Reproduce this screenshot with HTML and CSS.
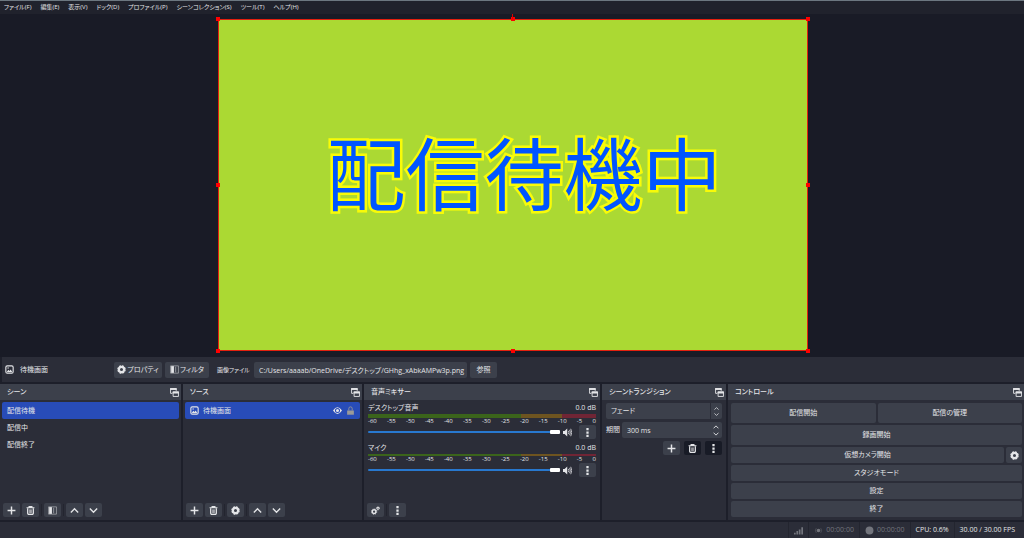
FILE: index.html
```html
<!DOCTYPE html>
<html lang="ja">
<head>
<meta charset="utf-8">
<title>OBS</title>
<link rel="stylesheet" href="styles.css">
</head>
<body>
<svg class="sprite" aria-hidden="true">
  <symbol id="plus" viewBox="0 0 16 16"><path d="M8 1v14M1 8h14" fill="none" stroke="currentColor" stroke-width="2.600"/></symbol>
  <symbol id="trash" viewBox="0 0 16 16"><path d="M1 3h14M5.500 2.500V1h5v1.500" fill="none" stroke="currentColor" stroke-width="2"/><path d="M3 4v9q0 2 2 2h6q2 0 2-2V4" fill="none" stroke="currentColor" stroke-width="2.300"/><path d="M5.500 6h5v7h-5z" fill="currentColor" opacity=".6"/></symbol>
  <symbol id="filter" viewBox="0 0 16 16"><path d="M1 1.500h14v13H1z" fill="none" stroke="currentColor" stroke-width="1.300" opacity=".65"/><path d="M2 2h5v12H2z" fill="currentColor"/><path d="M9 3h2v10H9z" fill="currentColor" opacity=".45"/></symbol>
  <symbol id="up" viewBox="0 0 16 16"><path d="M1.500 11.500L8 5l6.500 6.500" fill="none" stroke="currentColor" stroke-width="2.400"/></symbol>
  <symbol id="down" viewBox="0 0 16 16"><path d="M1.500 4.500L8 11l6.500-6.500" fill="none" stroke="currentColor" stroke-width="2.400"/></symbol>
  <symbol id="gear" viewBox="0 0 16 16"><circle cx="8" cy="8" r="4.600" fill="none" stroke="currentColor" stroke-width="3.800"/><circle cx="8" cy="8" r="6.400" fill="none" stroke="currentColor" stroke-width="2.400" stroke-dasharray="3.200 1.826"/></symbol>
  <symbol id="gears" viewBox="0 0 16 16"><circle cx="5.500" cy="10" r="3.300" fill="none" stroke="currentColor" stroke-width="2.600"/><circle cx="5.500" cy="10" r="4.900" fill="none" stroke="currentColor" stroke-width="1.200" stroke-dasharray="2 1.848"/><circle cx="12.500" cy="4" r="1.900" fill="none" stroke="currentColor" stroke-width="1.800"/><circle cx="12.500" cy="4" r="3" fill="none" stroke="currentColor" stroke-width="1" stroke-dasharray="1.300 1.056"/></symbol>
  <symbol id="dots" viewBox="0 0 16 16"><path d="M6 0h4v4H6zM6 6h4v4H6zM6 12h4v4H6z" fill="currentColor"/></symbol>
  <symbol id="image" viewBox="0 0 16 16"><rect x="1.500" y="1.500" width="13" height="13" rx="2.500" fill="none" stroke="currentColor" stroke-width="2"/><path d="M3 12.500l3-4 2 2 2-2.500 3 4.500z" fill="currentColor"/><circle cx="5.500" cy="5.500" r="1.300" fill="currentColor"/></symbol>
  <symbol id="float" viewBox="0 0 16 16"><path d="M4 9.500H1V1h10v4" fill="none" stroke="currentColor" stroke-width="1.600"/><path d="M.2.2h11.600v3.300H.2z" fill="currentColor"/><path d="M5.500 7h9.500v8H5.500z" fill="none" stroke="currentColor" stroke-width="1.600"/><path d="M4.700 6.200h11.100v3.600H4.700z" fill="currentColor"/></symbol>
  <symbol id="eye" viewBox="0 0 16 16"><path d="M0 8Q8-4 16 8 8 20 0 8z" fill="currentColor"/><circle cx="8" cy="8" r="3.600" fill="none" stroke="#284cb8" stroke-width="1.800"/></symbol>
  <symbol id="lock" viewBox="0 0 16 16"><path d="M5 8V4.500q0-3 3-3t3 3V8" fill="none" stroke="currentColor" stroke-width="1.500"/><path d="M2 8h12v7.500H2z" fill="currentColor"/></symbol>
  <symbol id="speaker" viewBox="0 0 17 16"><path d="M0 5h3l5-4.500v15L3 11H0z" fill="currentColor"/><path d="M10.200 5q2 3 0 6M12.400 3q3.200 5 0 10M14.600 1q4 7 0 14" fill="none" stroke="currentColor" stroke-width="1.500"/></symbol>
  <symbol id="signal" viewBox="0 0 16 16"><path d="M0 12h3v3H0zM4.300 9h3v6h-3zM8.600 6h3v9h-3zM13 2h3v13h-3z" fill="currentColor"/></symbol>
  <symbol id="live" viewBox="0 0 16 16"><circle cx="8" cy="8" r="3.200" fill="currentColor"/><path d="M4 4q-3 4 0 8M12 4q3 4 0 8" fill="none" stroke="currentColor" stroke-width="1.600" opacity=".5"/></symbol>
  <symbol id="record" viewBox="0 0 16 16"><circle cx="8" cy="8" r="7" fill="currentColor"/></symbol>
</svg>

<nav class="menu">
  <button>ファイル(F)</button><button>編集(E)</button><button>表示(V)</button><button>ドック(D)</button><button>プロファイル(P)</button><button>シーンコレクション(S)</button><button>ツール(T)</button><button>ヘルプ(H)</button>
</nav>

<main class="preview">
  <div class="canvas">
    <div class="caption">配信待機中</div>
    <i class="handle top left"></i><i class="handle top center"></i><i class="handle top right"></i>
    <i class="handle middle left"></i><i class="handle middle right"></i>
    <i class="handle bottom left"></i><i class="handle bottom center"></i><i class="handle bottom right"></i>
    <i class="stem"></i>
  </div>
</main>

<section class="context">
  <div class="context-name"><svg class="icon"><use href="#image"/></svg><span>待機画面</span></div>
  <button class="btn wide"><svg class="icon"><use href="#gear"/></svg>プロパティ</button>
  <button class="btn medium"><svg class="icon"><use href="#filter"/></svg>フィルタ</button>
  <label class="context-label" for="path">画像ファイル</label>
  <input class="field path" id="path" value="C:/Users/aaaab/OneDrive/デスクトップ/GHhg_xAbkAMPw3p.png">
  <button class="btn browse">参照</button>
</section>

<div class="docks">
  <section class="dock">
    <header class="dock-head"><h2>シーン</h2><button class="float" aria-label="シーンを切り離す"><svg class="icon"><use href="#float"/></svg></button></header>
    <ul class="list">
      <li class="row selected">配信待機</li>
      <li class="row">配信中</li>
      <li class="row">配信終了</li>
    </ul>
    <footer class="tools">
      <button class="tool" aria-label="追加"><svg class="icon"><use href="#plus"/></svg></button>
      <button class="tool" aria-label="削除"><svg class="icon"><use href="#trash"/></svg></button>
      <i class="split"></i>
      <button class="tool" aria-label="フィルタ"><svg class="icon"><use href="#filter"/></svg></button>
      <i class="split"></i>
      <button class="tool" aria-label="上へ"><svg class="icon"><use href="#up"/></svg></button>
      <button class="tool" aria-label="下へ"><svg class="icon"><use href="#down"/></svg></button>
    </footer>
  </section>

  <section class="dock">
    <header class="dock-head"><h2>ソース</h2><button class="float" aria-label="ソースを切り離す"><svg class="icon"><use href="#float"/></svg></button></header>
    <ul class="list">
      <li class="row selected"><svg class="icon"><use href="#image"/></svg><span class="grow">待機画面</span><svg class="icon"><use href="#eye"/></svg><svg class="icon lock"><use href="#lock"/></svg></li>
    </ul>
    <footer class="tools">
      <button class="tool" aria-label="追加"><svg class="icon"><use href="#plus"/></svg></button>
      <button class="tool" aria-label="削除"><svg class="icon"><use href="#trash"/></svg></button>
      <i class="split"></i>
      <button class="tool" aria-label="プロパティ"><svg class="icon"><use href="#gear"/></svg></button>
      <i class="split"></i>
      <button class="tool" aria-label="上へ"><svg class="icon"><use href="#up"/></svg></button>
      <button class="tool" aria-label="下へ"><svg class="icon"><use href="#down"/></svg></button>
    </footer>
  </section>

  <section class="dock">
    <header class="dock-head"><h2>音声ミキサー</h2><button class="float" aria-label="ミキサーを切り離す"><svg class="icon"><use href="#float"/></svg></button></header>
    <div class="mixer">
      <div class="channel">
        <div class="channel-head"><label for="desk">デスクトップ音声</label><span>0.0 dB</span></div>
        <div class="meter stereo"></div>
        <div class="scale"><span>-60</span><span>-55</span><span>-50</span><span>-45</span><span>-40</span><span>-35</span><span>-30</span><span>-25</span><span>-20</span><span>-15</span><span>-10</span><span>-5</span><span>0</span></div>
        <div class="fader"><input type="range" id="desk" value="100"><button class="mute" aria-label="ミュート"><svg class="icon"><use href="#speaker"/></svg></button><button class="tool" aria-label="メニュー"><svg class="icon"><use href="#dots"/></svg></button></div>
      </div>
      <div class="channel">
        <div class="channel-head"><label for="mic">マイク</label><span>0.0 dB</span></div>
        <div class="meter"></div>
        <div class="scale"><span>-60</span><span>-55</span><span>-50</span><span>-45</span><span>-40</span><span>-35</span><span>-30</span><span>-25</span><span>-20</span><span>-15</span><span>-10</span><span>-5</span><span>0</span></div>
        <div class="fader"><input type="range" id="mic" value="100"><button class="mute" aria-label="ミュート"><svg class="icon"><use href="#speaker"/></svg></button><button class="tool" aria-label="メニュー"><svg class="icon"><use href="#dots"/></svg></button></div>
      </div>
    </div>
    <footer class="tools">
      <button class="tool" aria-label="詳細設定"><svg class="icon"><use href="#gears"/></svg></button>
      <i class="split"></i>
      <button class="tool" aria-label="メニュー"><svg class="icon"><use href="#dots"/></svg></button>
    </footer>
  </section>

  <section class="dock">
    <header class="dock-head"><h2>シーントランジション</h2><button class="float" aria-label="トランジションを切り離す"><svg class="icon"><use href="#float"/></svg></button></header>
    <div class="transition">
      <div class="picker">
        <select class="field" aria-label="トランジション"><option>フェード</option></select>
        <span class="arrows"><svg><use href="#up"/></svg><svg><use href="#down"/></svg></span>
      </div>
      <div class="duration">
        <label for="ms">期間</label>
        <div class="spin">
          <input class="field" id="ms" value="300 ms">
          <span class="steps"><button aria-label="増やす"><svg><use href="#up"/></svg></button><button aria-label="減らす"><svg><use href="#down"/></svg></button></span>
        </div>
      </div>
      <div class="transition-tools">
        <button class="tool" aria-label="追加"><svg class="icon"><use href="#plus"/></svg></button>
        <button class="tool dark" aria-label="削除"><svg class="icon"><use href="#trash"/></svg></button>
        <button class="tool dark" aria-label="メニュー"><svg class="icon"><use href="#dots"/></svg></button>
      </div>
    </div>
  </section>

  <section class="dock">
    <header class="dock-head"><h2>コントロール</h2><button class="float" aria-label="コントロールを切り離す"><svg class="icon"><use href="#float"/></svg></button></header>
    <div class="controls">
      <div class="pair"><button class="btn tall">配信開始</button><button class="btn tall">配信の管理</button></div>
      <button class="btn tall">録画開始</button>
      <div class="pair"><button class="btn">仮想カメラ開始</button><button class="btn square" aria-label="仮想カメラの設定"><svg class="icon"><use href="#gear"/></svg></button></div>
      <button class="btn">スタジオモード</button>
      <button class="btn">設定</button>
      <button class="btn">終了</button>
    </div>
  </section>
</div>

<footer class="status">
  <span class="cell dim"><svg class="icon"><use href="#signal"/></svg></span>
  <span class="cell dim"><svg class="icon"><use href="#live"/></svg>00:00:00</span>
  <span class="cell dim"><svg class="icon"><use href="#record"/></svg>00:00:00</span>
  <span class="cell">CPU: 0.6%</span>
  <span class="cell">30.00 / 30.00 FPS</span>
</footer>
</body>
</html>
```
FILE: styles.css
```css
* { box-sizing: border-box; }

body {
  margin: 0;
  min-height: 100vh;
  display: flex;
  flex-direction: column;
  background: #1d1f2a;
  color: #e4e5e8;
  font: 7px/10px "Open Sans", "Noto Sans CJK JP", sans-serif;
  font-feature-settings: "palt";
}

button, input, select {
  margin: 0;
  padding: 0;
  border: 0;
  background: none;
  color: inherit;
  font: inherit;
  font-feature-settings: inherit;
}

svg { display: block; flex: none; }
.sprite { position: absolute; width: 0; height: 0; }
.icon { width: 9px; height: 9px; }

.menu {
  display: flex;
  gap: 9px;
  height: 14px;
  padding: 0 4px 1px;
  border-top: 1px solid #6c7780;
  background: #20222c;
  font-size: 6px;
  white-space: nowrap;
}

.preview {
  flex: 1;
  display: flex;
  align-items: center;
  justify-content: center;
  padding: 0 0 1px 2px;
  background: #191b26;
}

.canvas {
  position: relative;
  display: flex;
  align-items: center;
  justify-content: center;
  width: 57.7%;
  aspect-ratio: 590 / 333;
  padding: 0 0 20px 22px;
  border: 1px solid #e3200e;
  background: #abd933;
}

.caption {
  color: #0055ff;
  font-size: 79px;
  line-height: 80px;
  white-space: nowrap;
  font-feature-settings: normal;
  -webkit-text-stroke: 5px #f8fb08;
  stroke-linejoin: round;
  paint-order: stroke fill;
}

.handle { position: absolute; width: 4px; height: 4px; background: #f00; }
.top { top: -3px; }
.middle { top: calc(50% - 2px); }
.bottom { bottom: -3px; }
.left { left: -3px; }
.center { left: calc(50% - 2px); }
.right { right: -3px; }
.stem { position: absolute; top: -6px; left: calc(50% - 1px); width: 1px; height: 5px; background: #d00; }

.context {
  display: flex;
  align-items: center;
  height: 25px;
  margin: 0 0 2px 2px;
  padding: 0 3px;
  background: #2b2d38;
  white-space: nowrap;
}
.context-name { display: flex; align-items: center; gap: 6px; width: 109px; }
.context-label { margin: 0 4px 0 5px; width: 33px; font-size: 6px; }

.btn {
  display: flex;
  align-items: center;
  justify-content: center;
  gap: 1px;
  height: 16px;
  border-radius: 2px;
  background: #3c404b;
  white-space: nowrap;
}
.wide { width: 48px; margin-right: 3px; }
.medium { width: 44px; margin-right: 3px; }
.browse { width: 27px; margin-left: 3px; }
.field { height: 16px; padding: 0 0 0 5px; border-radius: 2px; background: #3c404b; }
.path { width: 213px; }

.docks {
  display: grid;
  grid-template-columns: 181fr 179fr 236fr 124fr 296fr;
  gap: 2px;
}
.dock { min-width: 0; display: flex; flex-direction: column; background: #2b2d38; }
.dock-head {
  display: flex;
  align-items: center;
  justify-content: space-between;
  height: 16px;
  padding: 0 2px 0 7px;
  background: #3c404b;
}
.dock-head h2 { margin: 0; font-size: 7px; font-weight: 500; white-space: nowrap; }

.list { flex: 1; margin: 0; padding: 2px; list-style: none; }
.row { display: flex; align-items: center; gap: 4px; height: 17px; padding: 0 5px; border-radius: 2px; }
.selected { background: #284cb8; }
.grow { flex: 1; }
.lock { color: #9b9a98; }

.tools { display: flex; align-items: center; gap: 2px; padding: 0 3px 3px; }
.tool {
  display: flex;
  align-items: center;
  justify-content: center;
  width: 17px;
  height: 14px;
  border-radius: 2px;
  background: #3c404b;
}
.split { width: 1px; height: 12px; background: #23252f; }
.dark { background: #181b26; }

.mixer { flex: 1; padding: 3px 4px 0; }
.channel { display: flex; flex-direction: column; margin-bottom: 4px; }
.channel-head { display: flex; justify-content: space-between; margin-bottom: 1px; }
.meter { height: 2px; background: linear-gradient(90deg, #3b641b 67%, #6e5420 67% 85%, #702535 85%); }
.stereo { height: 4px; }
.scale { display: flex; justify-content: space-between; font-size: 6px; line-height: 7px; }
.fader { display: flex; align-items: center; gap: 3px; height: 14px; }
.fader input { flex: 1; min-width: 0; height: 10px; appearance: none; }
.fader input::-webkit-slider-runnable-track { height: 2px; border-radius: 1px; background: #2878cf; }
.fader input::-webkit-slider-thumb { appearance: none; width: 10px; height: 4px; margin-top: -1px; border-radius: 1px; background: #fff; }
.mute { margin-right: 4px; }

.transition { display: flex; flex-direction: column; gap: 3px; padding: 3px 4px; }
.picker, .spin { position: relative; display: flex; }
.picker .field { width: 100%; appearance: none; }
.arrows, .steps {
  position: absolute;
  top: 0;
  right: 0;
  bottom: 0;
  width: 12px;
  display: flex;
  flex-direction: column;
  align-items: center;
  justify-content: center;
  gap: 1px;
}
.arrows { border-left: 1px solid #2b2d38; pointer-events: none; }
.arrows svg { width: 5px; height: 5px; }
.steps svg { width: 6px; height: 6px; }
.duration { display: flex; align-items: center; gap: 2px; white-space: nowrap; }
.spin { flex: 1; min-width: 0; }
.spin .field { width: 100%; min-width: 0; }
.transition-tools { display: flex; justify-content: flex-end; gap: 4px; }

.controls { display: flex; flex-direction: column; gap: 2px; padding: 3px 2px 3px 3px; }
.pair { display: flex; gap: 2px; }
.pair .btn { flex: 1; }
.tall { height: 20px; }
.pair .square { flex: none; width: 16px; }

.status {
  display: flex;
  justify-content: flex-end;
  height: 16px;
  margin-top: 2px;
  padding-right: 4px;
  background: #2b2d38;
}
.cell { display: flex; align-items: center; gap: 3px; padding: 0 5px; border-left: 1px solid #23252f; white-space: nowrap; }
.dim { color: #73757d; }
```
